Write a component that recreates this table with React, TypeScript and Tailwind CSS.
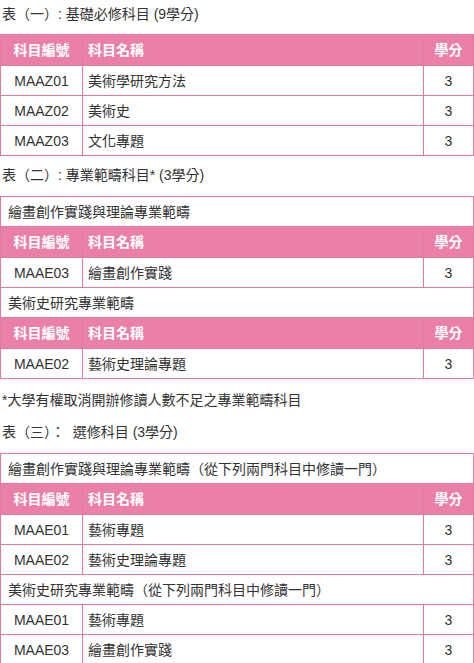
import React from 'react';

type Course = { code: string; name: string; credit: number };

const font = { fontFamily: '"Liberation Sans", Arial, "Noto Sans CJK TC", sans-serif' };

const HeaderRow = () => (
  <tr className="h-[31px] bg-[#ea80a8] text-white">
    <th className="border border-[#e27aa3] p-0 text-center font-bold">科目編號</th>
    <th className="border border-[#e27aa3] p-0 pl-[5px] text-left font-bold">科目名稱</th>
    <th className="border border-[#e27aa3] p-0 text-center font-bold">學分</th>
  </tr>
);

const CourseRow = ({ c }: { c: Course }) => (
  <tr className="h-[30px]">
    <td className="border border-[#e27aa3] p-0 text-center">{c.code}</td>
    <td className="border border-[#e27aa3] p-0 pl-[5px]">{c.name}</td>
    <td className="border border-[#e27aa3] p-0 text-center">{c.credit}</td>
  </tr>
);

const SectionRow = ({ title }: { title: string }) => (
  <tr className="h-[30px]">
    <td colSpan={3} className="border border-[#e27aa3] p-0 pl-[7px]">
      {title}
    </td>
  </tr>
);

type Block = { section?: string; header: boolean; courses: Course[] };

const CourseTable = ({ blocks, className }: { blocks: Block[]; className: string }) => (
  <table className={`w-full border-collapse table-fixed ${className}`}>
    <colgroup>
      <col className="w-[82px]" />
      <col />
      <col className="w-[50px]" />
    </colgroup>
    <tbody>
      {blocks.map((b, i) => (
        <React.Fragment key={i}>
          {b.section && <SectionRow title={b.section} />}
          {b.header && <HeaderRow />}
          {b.courses.map((c) => (
            <CourseRow key={c.code} c={c} />
          ))}
        </React.Fragment>
      ))}
    </tbody>
  </table>
);

export default function App() {
  return (
    <div className="min-h-screen bg-white text-[14px] leading-[20px] text-[#333333]" style={font}>
      <p className="pt-[4px] pl-[2px]">表（一）: 基礎必修科目 (9學分)</p>
      <CourseTable
        className="mt-[10px]"
        blocks={[
          {
            header: true,
            courses: [
              { code: 'MAAZ01', name: '美術學研究方法', credit: 3 },
              { code: 'MAAZ02', name: '美術史', credit: 3 },
              { code: 'MAAZ03', name: '文化專題', credit: 3 },
            ],
          },
        ]}
      />

      <p className="mt-[9px] pl-[2px]">表（二）: 專業範疇科目* (3學分)</p>
      <CourseTable
        className="mt-[11px]"
        blocks={[
          {
            section: '繪畫創作實踐與理論專業範疇',
            header: true,
            courses: [{ code: 'MAAE03', name: '繪畫創作實踐', credit: 3 }],
          },
          {
            section: '美術史研究專業範疇',
            header: true,
            courses: [{ code: 'MAAE02', name: '藝術史理論專題', credit: 3 }],
          },
        ]}
      />

      <p className="mt-[11px] pl-[2px]">*大學有權取消開辦修讀人數不足之專業範疇科目</p>
      <p className="mt-[12px] pl-[2px]">表（三）：&nbsp; 選修科目 (3學分)</p>
      <CourseTable
        className="mt-[11px]"
        blocks={[
          {
            section: '繪畫創作實踐與理論專業範疇（從下列兩門科目中修讀一門）',
            header: true,
            courses: [
              { code: 'MAAE01', name: '藝術專題', credit: 3 },
              { code: 'MAAE02', name: '藝術史理論專題', credit: 3 },
            ],
          },
          {
            section: '美術史研究專業範疇（從下列兩門科目中修讀一門）',
            header: false,
            courses: [
              { code: 'MAAE01', name: '藝術專題', credit: 3 },
              { code: 'MAAE03', name: '繪畫創作實踐', credit: 3 },
            ],
          },
        ]}
      />
    </div>
  );
}
